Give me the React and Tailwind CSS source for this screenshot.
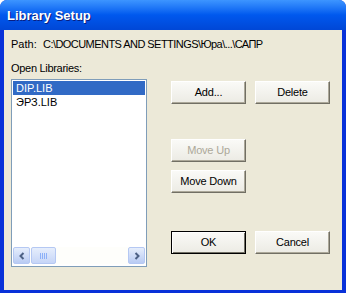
import React from 'react'

const font = { fontFamily: '"Liberation Sans", Arial, sans-serif' }

function Button({ children, disabled, isDefault, className = '' }) {
  return (
    <div
      className={`w-[75px] h-[23px] flex items-center justify-center text-[11px] tracking-[-0.2px] bg-gradient-to-b from-[#FAFAF7] to-[#ECEBE4] ${
        isDefault
          ? 'border border-black shadow-[inset_1px_1px_0_#fff,inset_-1px_-1px_0_#716F64]'
          : 'border border-t-[#FFFFFF] border-l-[#FFFFFF] border-r-[#716F64] border-b-[#716F64] shadow-[inset_-1px_-1px_0_#ACA899]'
      } ${disabled ? 'text-[#ACA899]' : 'text-black'} ${className}`}
    >
      {children}
    </div>
  )
}

function Chevron({ dir }) {
  return (
    <svg width="8" height="8" viewBox="0 0 8 8">
      <path
        d={dir === 'left' ? 'M5.5 1 L2.5 4 L5.5 7' : 'M2.5 1 L5.5 4 L2.5 7'}
        fill="none"
        stroke="#4D6185"
        strokeWidth="2"
      />
    </svg>
  )
}

export default function App() {
  return (
    <div className="w-[346px] h-[295px] bg-white overflow-hidden" style={font}>
      <div className="w-[346px] h-[293px] flex flex-col rounded-t-[7px] overflow-hidden bg-[#0831D9]">
        {/* title bar */}
        <div className="h-[30px] shrink-0 flex items-center pl-[7px] pt-[1px] bg-gradient-to-b from-[#3D95FF] via-[#0058EE] to-[#0047D6]">
          <span className="text-white font-bold text-[13px] [text-shadow:1px_1px_0_#0A1E80]">Library Setup</span>
        </div>
        {/* client */}
        <div className="flex-1 mx-[4px] mb-[3px] bg-[#ECE9D8] flex flex-col text-[11px] text-black">
          <div className="flex h-[13px] mt-[8px] leading-[13px]">
            <span className="ml-[7px] w-[32px]">Path:</span>
            <span className="tracking-[-0.55px]">C:\DOCUMENTS AND SETTINGS\Юра\...\САПР</span>
          </div>
          <div className="flex mt-[11px]">
            <div className="flex flex-col ml-[7px]">
              <div className="h-[13px] leading-[13px] tracking-[-0.3px]">Open Libraries:</div>
              <div className="mt-[4px] w-[136px] h-[188px] border border-[#7F9DB9] bg-white flex flex-col p-[1px]">
                <div className="h-[14px] leading-[14px] pl-[3px] bg-[#316AC5] text-white">DIP.LIB</div>
                <div className="h-[14px] leading-[14px] pl-[3px]">ЭРЗ.LIB</div>
                <div className="flex-1" />
                <div className="h-[17px] flex bg-[#FEFEFB] mb-[1px]">
                  <div className="w-[17px] h-[17px] rounded-[2px] border border-[#B5C8F3] bg-gradient-to-b from-[#E6EEFC] to-[#B9CBF3] flex items-center justify-center">
                    <Chevron dir="left" />
                  </div>
                  <div className="ml-[1px] w-[25px] h-[17px] rounded-[2px] border border-[#B5C8F3] bg-gradient-to-b from-[#E6EEFC] to-[#C6D5F7] flex items-center justify-center gap-[1px]">
                    <span className="w-[1px] h-[6px] bg-[#8CB0F8]" />
                    <span className="w-[1px] h-[6px] bg-[#8CB0F8]" />
                    <span className="w-[1px] h-[6px] bg-[#8CB0F8]" />
                    <span className="w-[1px] h-[6px] bg-[#8CB0F8]" />
                  </div>
                  <div className="flex-1" />
                  <div className="w-[17px] h-[17px] rounded-[2px] border border-[#B5C8F3] bg-gradient-to-b from-[#E6EEFC] to-[#B9CBF3] flex items-center justify-center">
                    <Chevron dir="right" />
                  </div>
                </div>
              </div>
            </div>
            <div className="flex flex-col ml-[24px] mt-[19px]">
              <div className="flex gap-[9px]">
                <Button>Add...</Button>
                <Button>Delete</Button>
              </div>
              <Button disabled className="mt-[35px]">Move Up</Button>
              <Button className="mt-[8px]">Move Down</Button>
              <div className="flex gap-[9px] mt-[38px]">
                <Button isDefault>OK</Button>
                <Button>Cancel</Button>
              </div>
            </div>
          </div>
        </div>
      </div>
    </div>
  )
}
